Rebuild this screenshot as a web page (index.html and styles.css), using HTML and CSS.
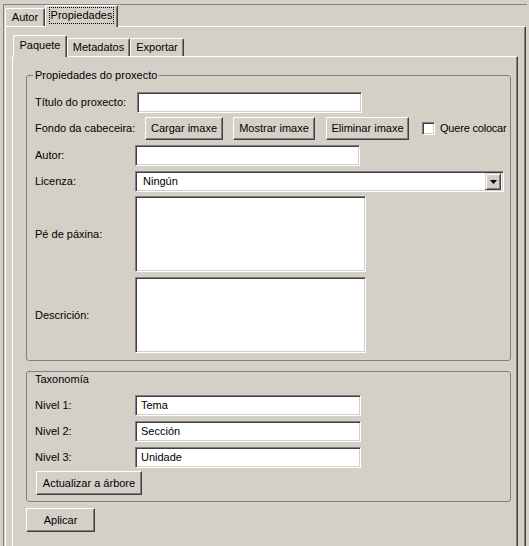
FILE: index.html
```html
<!DOCTYPE html>
<html>
<head>
<meta charset="utf-8">
<link rel="stylesheet" href="styles.css">
</head>
<body>
<div class="frame">
  <div class="tabbar outer-tabs">
    <div class="tab t-autor">Autor</div>
    <div class="tab sel t-prop"><span class="focus">Propiedades</span></div>
  </div>
  <div class="panel outer-panel">
    <div class="tabbar inner-tabs">
      <div class="tab sel t-paq">Paquete</div>
      <div class="tab t-meta">Metadatos</div>
      <div class="tab t-exp">Exportar</div>
    </div>
    <div class="panel inner-panel">
      <fieldset class="group">
        <legend>Propiedades do proxecto</legend>
        <div class="row r-title">
          <span class="lbl">Título do proxecto:</span>
          <div class="sunken f-title"></div>
        </div>
        <div class="row r-bg">
          <span class="lbl">Fondo da cabeceira:</span>
          <div class="btn b-load">Cargar imaxe</div>
          <div class="btn b-show">Mostrar imaxe</div>
          <div class="btn b-del">Eliminar imaxe</div>
          <div class="check"></div>
          <span class="check-lbl">Quere colocar</span>
        </div>
        <div class="row r-author">
          <span class="lbl">Autor:</span>
          <div class="sunken f-author"></div>
        </div>
        <div class="row r-lic">
          <span class="lbl">Licenza:</span>
          <div class="sunken select">
            <span class="sel-text">Ningún</span>
            <div class="drop"><svg width="7" height="4" viewBox="0 0 7 4"><polygon points="0,0 7,0 3.5,4" fill="#000"/></svg></div>
          </div>
        </div>
        <div class="row r-foot">
          <span class="lbl">Pé de páxina:</span>
          <div class="sunken area"></div>
        </div>
        <div class="row r-desc">
          <span class="lbl">Descrición:</span>
          <div class="sunken area"></div>
        </div>
      </fieldset>
      <div class="group2">
        <div class="g2-title">Taxonomía</div>
        <div class="row r-level">
          <span class="lbl">Nivel 1:</span>
          <div class="sunken f-level">Tema</div>
        </div>
        <div class="row r-level">
          <span class="lbl">Nivel 2:</span>
          <div class="sunken f-level">Sección</div>
        </div>
        <div class="row r-level last">
          <span class="lbl">Nivel 3:</span>
          <div class="sunken f-level">Unidade</div>
        </div>
        <div class="btn b-update">Actualizar a árbore</div>
      </div>
      <div class="btn b-apply">Aplicar</div>
    </div>
  </div>
</div>
</body>
</html>
```

FILE: styles.css
```css
* { box-sizing: border-box; }
html, body { margin: 0; padding: 0; }
body {
  background: #d4d0c8;
  font-family: "Liberation Sans", Arial, sans-serif;
  font-size: 11px;
  line-height: 13px;
  color: #000;
  width: 529px;
  height: 546px;
  overflow: hidden;
}

.frame {
  margin: 4px 0 0 3px;
  width: 524px;
  height: 560px;
  border-top: 1px solid #808080;
  border-left: 1px solid #808080;
}

.tabbar { display: flex; align-items: flex-end; }
.outer-tabs { height: 21px; padding-left: 1px; }
.inner-tabs { height: 21px; padding-left: 1px; }

.tab {
  height: 18px;
  background: #d4d0c8;
  border-top: 1px solid #fff;
  border-left: 1px solid #fff;
  border-right: 1px solid #404040;
  box-shadow: inset -1px 0 #808080;
  border-radius: 2px 2px 0 0;
  display: flex;
  align-items: center;
  justify-content: center;
  white-space: nowrap;
}
.tab.sel {
  height: 22px;
  margin-bottom: -1px;
  padding-bottom: 2px;
  position: relative;
  z-index: 1;
}
.t-autor { width: 40px; }
.t-prop { width: 73px; }
.focus { border: 1px dotted #000; padding: 1px 1px; line-height: 13px; }
.t-paq { width: 54px; }
.t-meta { width: 63px; }
.t-exp { width: 54px; }

.panel {
  border-top: 1px solid #fff;
  border-left: 1px solid #fff;
  border-right: 1px solid #404040;
  box-shadow: inset -1px 0 #808080;
}
.outer-panel {
  margin-left: 1px;
  width: 521px;
  height: 540px;
  padding: 8px 0 0 6px;
}
.inner-panel {
  width: 506px;
  height: 520px;
  padding: 12px 0 0 13px;
}

.group {
  margin: 0;
  width: 485px;
  min-width: 0;
  min-inline-size: 0;
  border: 1px solid #808080;
  border-radius: 3px;
  padding: 10px 8px 7px 8px;
}
.group legend {
  padding: 0 2px;
  margin-left: -2px;
  line-height: 13px;
}

.row { display: flex; align-items: center; }
.lbl { width: 100px; flex: none; white-space: nowrap; }

.sunken {
  background: #fff;
  border: 1px solid;
  border-color: #808080 #fff #fff #808080;
  box-shadow: inset 1px 1px #404040, inset -1px -1px #d4d0c8;
  flex: none;
}
.btn {
  background: #d4d0c8;
  border: 1px solid;
  border-color: #fff #404040 #404040 #fff;
  box-shadow: inset -1px -1px #808080;
  display: flex;
  align-items: center;
  justify-content: center;
  white-space: nowrap;
  flex: none;
}

.r-title { height: 21px; margin-bottom: 4px; }
.f-title { width: 225px; height: 21px; margin-left: 2px; }

.r-bg { height: 23px; margin-bottom: 5px; }
.r-bg .btn { height: 23px; }
.b-load { width: 78px; margin-left: 10px; }
.b-show { width: 82px; margin-left: 10px; }
.b-del { width: 83px; margin-left: 11px; }
.check {
  width: 13px;
  height: 13px;
  margin-left: 13px;
  flex: none;
  background: #fff;
  border: 1px solid;
  border-color: #808080 #fff #fff #808080;
  box-shadow: inset 1px 1px #404040, inset -1px -1px #d4d0c8;
}
.check-lbl { margin-left: 5px; white-space: nowrap; letter-spacing: -0.2px; }

.r-author { height: 21px; margin-bottom: 5px; }
.f-author { width: 225px; height: 21px; }

.r-lic { height: 21px; margin-bottom: 4px; }
.select {
  width: 369px;
  height: 21px;
  display: flex;
  align-items: center;
  padding: 2px;
}
.sel-text { padding-left: 5px; }
.drop {
  margin-left: auto;
  width: 16px;
  height: 17px;
  background: #d4d0c8;
  border: 1px solid;
  border-color: #d4d0c8 #404040 #404040 #d4d0c8;
  box-shadow: inset 1px 1px #fff, inset -1px -1px #808080;
  display: flex;
  align-items: center;
  justify-content: center;
}
.drop svg { display: block; }

.r-foot { height: 76px; margin-bottom: 5px; }
.r-desc { height: 76px; }
.area { width: 231px; height: 76px; }

.group2 {
  margin-top: 10px;
  width: 485px;
  border: 1px solid #808080;
  border-radius: 3px;
  padding: 1px 8px 6px 8px;
}
.g2-title { margin-bottom: 9px; }
.r-level { height: 21px; margin-bottom: 5px; }
.r-level.last { margin-bottom: 3px; }
.f-level { width: 226px; height: 21px; padding: 3px 0 0 5px; }
.b-update { width: 106px; height: 24px; margin-left: 1px; }
.b-apply { width: 69px; height: 24px; margin-top: 6px; }
```
